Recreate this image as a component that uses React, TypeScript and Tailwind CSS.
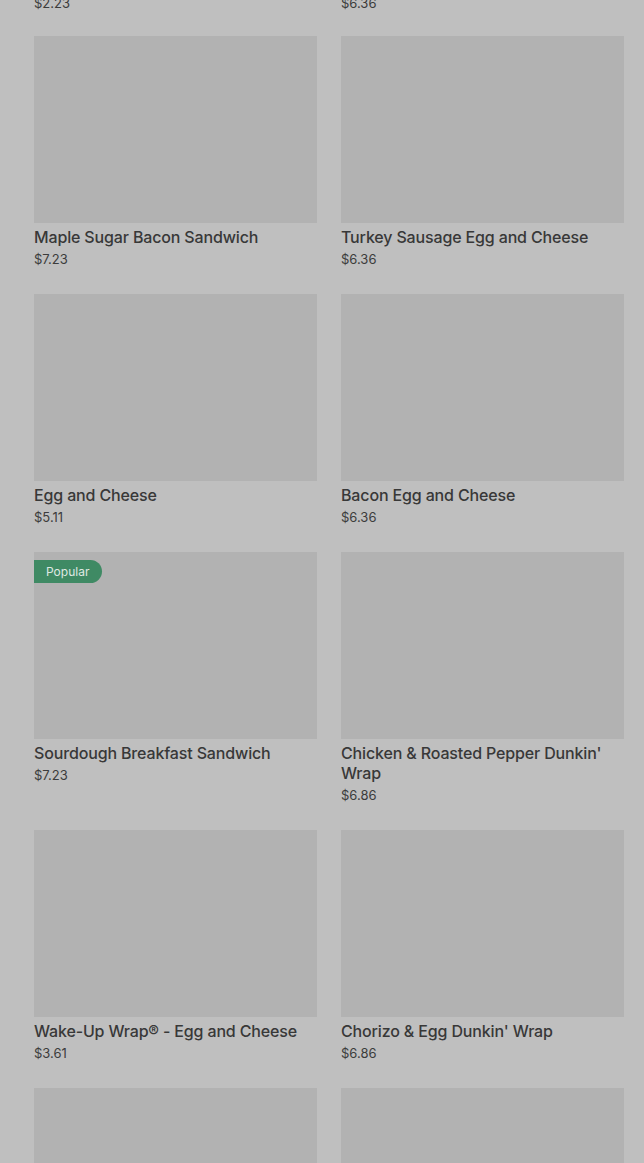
import React from "react";

type Item = { name: string; price: string; popular?: boolean };

const rows: Item[][] = [
  [
    { name: "Maple Sugar Bacon Sandwich", price: "$7.23" },
    { name: "Turkey Sausage Egg and Cheese", price: "$6.36" },
  ],
  [
    { name: "Egg and Cheese", price: "$5.11" },
    { name: "Bacon Egg and Cheese", price: "$6.36" },
  ],
  [
    { name: "Sourdough Breakfast Sandwich", price: "$7.23", popular: true },
    { name: "Chicken & Roasted Pepper Dunkin' Wrap", price: "$6.86" },
  ],
  [
    { name: "Wake-Up Wrap® - Egg and Cheese", price: "$3.61" },
    { name: "Chorizo & Egg Dunkin' Wrap", price: "$6.86" },
  ],
];

function Card({ item }: { item: Item }) {
  return (
    <div className="flex flex-col">
      <div className="relative h-[187px] bg-[#b2b2b2]">
        {item.popular && (
          <div className="absolute left-0 top-[8px] flex h-[23px] items-center rounded-r-full bg-[#3f8a64] pl-[12px] pr-[13px] text-[12px] text-[#dfe8e2]">
            Popular
          </div>
        )}
      </div>
      <div className="mt-[4px] text-[16px] font-medium leading-[20px] tracking-[-0.15px] text-[#383838]">
        {item.name}
      </div>
      <div className="mt-[2px] text-[13px] leading-[20px] text-[#3c3c3c]">{item.price}</div>
    </div>
  );
}

export default function App() {
  return (
    <div
      className="h-[1163px] overflow-hidden bg-[#bfbfbf] pl-[34px] pr-[20px]"
      style={{ fontFamily: "Inter, 'Noto Sans', sans-serif" }}
    >
      <div className="-mt-[7px] mb-[23px] grid grid-cols-2 gap-x-[24px] text-[13px] leading-[20px] text-[#3c3c3c]">
        <div>$2.23</div>
        <div>$6.36</div>
      </div>
      <div className="grid grid-cols-2 gap-x-[24px] gap-y-[25px]">
        {rows.map((row, i) => (
          <React.Fragment key={i}>
            <Card item={row[0]} />
            <Card item={row[1]} />
          </React.Fragment>
        ))}
        <div className="h-[187px] bg-[#b2b2b2]" />
        <div className="h-[187px] bg-[#b2b2b2]" />
      </div>
    </div>
  );
}
